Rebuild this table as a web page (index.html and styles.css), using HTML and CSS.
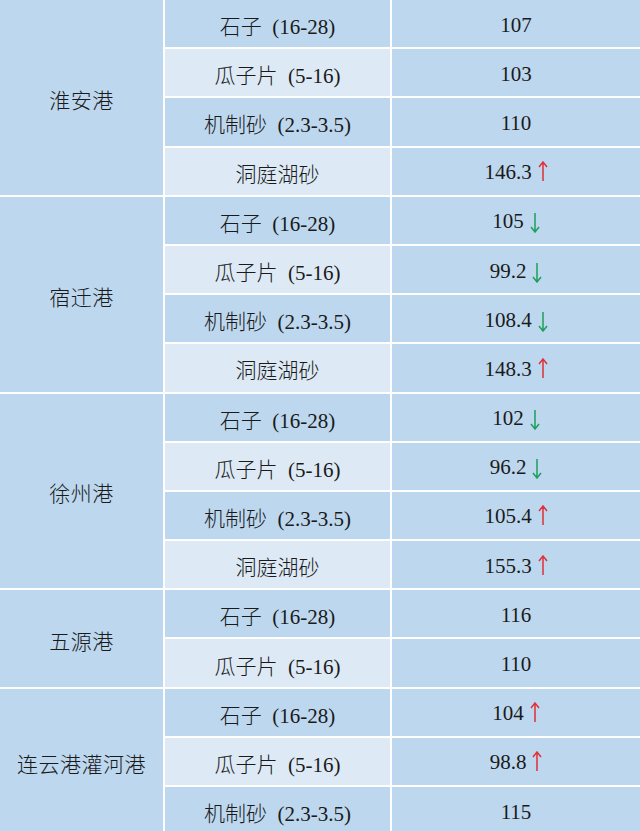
FILE: index.html
```html
<!DOCTYPE html>
<html lang="zh">
<head>
<meta charset="utf-8">
<link rel="stylesheet" href="styles.css">
</head>
<body>
<div class="grid">
  <div class="port" style="grid-row: span 4">淮安港</div>
  <div class="prod dark">石子&nbsp;&nbsp;(16-28)</div><div class="price">107</div>
  <div class="prod light">瓜子片&nbsp;&nbsp;(5-16)</div><div class="price">103</div>
  <div class="prod dark">机制砂&nbsp;&nbsp;(2.3-3.5)</div><div class="price">110</div>
  <div class="prod light">洞庭湖砂</div><div class="price">146.3 <svg class="up" viewBox="0 0 10 20"><path d="M5 1V20M1 6L5 1L9 6"/></svg></div>

  <div class="port" style="grid-row: span 4">宿迁港</div>
  <div class="prod dark">石子&nbsp;&nbsp;(16-28)</div><div class="price">105 <svg class="down" viewBox="0 0 10 20"><path d="M5 0V19M1 14L5 19L9 14"/></svg></div>
  <div class="prod light">瓜子片&nbsp;&nbsp;(5-16)</div><div class="price">99.2 <svg class="down" viewBox="0 0 10 20"><path d="M5 0V19M1 14L5 19L9 14"/></svg></div>
  <div class="prod dark">机制砂&nbsp;&nbsp;(2.3-3.5)</div><div class="price">108.4 <svg class="down" viewBox="0 0 10 20"><path d="M5 0V19M1 14L5 19L9 14"/></svg></div>
  <div class="prod light">洞庭湖砂</div><div class="price">148.3 <svg class="up" viewBox="0 0 10 20"><path d="M5 1V20M1 6L5 1L9 6"/></svg></div>

  <div class="port" style="grid-row: span 4">徐州港</div>
  <div class="prod dark">石子&nbsp;&nbsp;(16-28)</div><div class="price">102 <svg class="down" viewBox="0 0 10 20"><path d="M5 0V19M1 14L5 19L9 14"/></svg></div>
  <div class="prod light">瓜子片&nbsp;&nbsp;(5-16)</div><div class="price">96.2 <svg class="down" viewBox="0 0 10 20"><path d="M5 0V19M1 14L5 19L9 14"/></svg></div>
  <div class="prod dark">机制砂&nbsp;&nbsp;(2.3-3.5)</div><div class="price">105.4 <svg class="up" viewBox="0 0 10 20"><path d="M5 1V20M1 6L5 1L9 6"/></svg></div>
  <div class="prod light">洞庭湖砂</div><div class="price">155.3 <svg class="up" viewBox="0 0 10 20"><path d="M5 1V20M1 6L5 1L9 6"/></svg></div>

  <div class="port" style="grid-row: span 2">五源港</div>
  <div class="prod dark">石子&nbsp;&nbsp;(16-28)</div><div class="price">116</div>
  <div class="prod light">瓜子片&nbsp;&nbsp;(5-16)</div><div class="price">110</div>

  <div class="port" style="grid-row: span 3">连云港灌河港</div>
  <div class="prod dark">石子&nbsp;&nbsp;(16-28)</div><div class="price">104 <svg class="up" viewBox="0 0 10 20"><path d="M5 1V20M1 6L5 1L9 6"/></svg></div>
  <div class="prod light">瓜子片&nbsp;&nbsp;(5-16)</div><div class="price">98.8 <svg class="up" viewBox="0 0 10 20"><path d="M5 1V20M1 6L5 1L9 6"/></svg></div>
  <div class="prod dark">机制砂&nbsp;&nbsp;(2.3-3.5)</div><div class="price">115</div>
</div>
</body>
</html>
```
FILE: styles.css
```css
html, body {
  margin: 0;
  padding: 0;
  background: #ffffff;
  overflow: hidden;
}
.grid {
  display: grid;
  grid-template-columns: 163px 225px 1fr;
  grid-auto-rows: 47.2px;
  gap: 2px;
  background: #ffffff;
  width: 640px;
  font-family: "Liberation Serif", "Noto Sans CJK SC", serif;
  font-size: 21px;
  font-weight: 300;
  color: #1a1a1a;
}
.grid > div {
  display: flex;
  align-items: center;
  justify-content: center;
  white-space: nowrap;
  padding-top: 3px;
  box-sizing: border-box;
}
.port {
  background: #bdd7ee;
  letter-spacing: 0.5px;
}
.dark { background: #bdd7ee; }
.light { background: #dde9f5; }
.price {
  background: #bdd7ee;
  gap: 6px;
}
.price svg {
  width: 10px;
  height: 20px;
  fill: none;
  stroke-width: 1.5;
}
.up { stroke: #e0303a; margin-top: -3px; }
.down { stroke: #1e9e5a; margin-top: 3px; }
```
